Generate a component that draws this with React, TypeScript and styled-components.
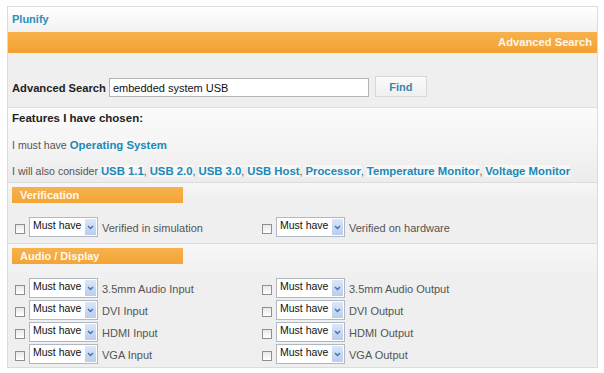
import React from 'react'
import styled, {createGlobalStyle} from 'styled-components'

const GlobalStyle = createGlobalStyle`
  body {
    margin: 0;
    background: #fff;
    font-family: "Liberation Sans", Arial, sans-serif;
  }
`

const chosen = ['Operating System']
const considered = ['USB 1.1', 'USB 2.0', 'USB 3.0', 'USB Host', 'Processor', 'Temperature Monitor', 'Voltage Monitor']

const sections = [
  {title: 'Verification', items: ['Verified in simulation', 'Verified on hardware']},
  {
    title: 'Audio / Display',
    items: [
      '3.5mm Audio Input', '3.5mm Audio Output',
      'DVI Input', 'DVI Output',
      'HDMI Input', 'HDMI Output',
      'VGA Input', 'VGA Output',
    ],
  },
]

const Chevron: React.FC = () => (
  <svg width="7" height="5" viewBox="0 0 7 5">
    <path d="M1 1 L3.5 3.5 L6 1" fill="none" stroke="#4a6fa8" strokeWidth="1.4" />
  </svg>
)

const FeatureRow: React.FC<{label: string}> = ({label}) => (
  <StyledRow>
    <StyledCheck type="checkbox" />
    <StyledSelect>
      <span>Must have</span>
      <StyledArrow><Chevron /></StyledArrow>
    </StyledSelect>
    <StyledRowLabel>{label}</StyledRowLabel>
  </StyledRow>
)

const LinkList: React.FC<{items: string[]}> = ({items}) => (
  <>
    {items.map((item, i) => (
      <React.Fragment key={item}>
        <StyledLink href="#">{item}</StyledLink>
        {i < items.length - 1 && ', '}
      </React.Fragment>
    ))}
  </>
)

const App: React.FC = () => {
  return (
    <StyledPage>
      <GlobalStyle />
      <StyledFrame>
        <StyledTopBar>Plunify</StyledTopBar>
        <StyledTitleBar>Advanced Search</StyledTitleBar>

        <StyledSearch>
          <StyledSearchLabel>Advanced Search</StyledSearchLabel>
          <StyledInput defaultValue="embedded system USB" />
          <StyledFind>Find</StyledFind>
        </StyledSearch>

        <StyledFeatures>
          <StyledFeaturesTitle>Features I have chosen:</StyledFeaturesTitle>
          <StyledLine gap={7}>I must have <LinkList items={chosen} /></StyledLine>
          <StyledLine gap={6}>I will also consider <LinkList items={considered} /></StyledLine>
        </StyledFeatures>

        {sections.map((section) => (
          <StyledSection key={section.title}>
            <StyledSectionHeader>{section.title}</StyledSectionHeader>
            <StyledGrid>
              {section.items.map((item) => <FeatureRow key={item} label={item} />)}
            </StyledGrid>
          </StyledSection>
        ))}
      </StyledFrame>
    </StyledPage>
  )
}

const StyledPage = styled.div`
  padding: 6px 0 0 7px;
`

const StyledFrame = styled.div`
  width: 589px;
  border: 1px solid #dcdcdc;
  display: flex;
  flex-direction: column;
  background: #f0f0f0;
`

const StyledTopBar = styled.div`
  height: 25px;
  line-height: 24px;
  padding-left: 4px;
  font-size: 11px;
  font-weight: bold;
  color: #2b8fbd;
  background: linear-gradient(#ffffff, #f2f2f2);
`

const StyledTitleBar = styled.div`
  height: 21px;
  line-height: 21px;
  padding-right: 5px;
  text-align: right;
  font-size: 11.2px;
  font-weight: bold;
  color: #fff6e6;
  background: linear-gradient(#f7b14c, #f3a232);
`

const StyledSearch = styled.div`
  height: 44px;
  padding: 0 0 10px 4px;
  display: flex;
  align-items: flex-end;
  background: #efefef;
  border-bottom: 1px solid #dedede;
`

const StyledSearchLabel = styled.label`
  font-size: 11.2px;
  font-weight: bold;
  color: #222;
  line-height: 17px;
  margin-right: 3px;
`

const StyledInput = styled.input`
  box-sizing: border-box;
  width: 260px;
  height: 19px;
  border: 1px solid #b5b5b5;
  background: #fff;
  padding: 0 3px;
  font-family: "Liberation Sans", Arial, sans-serif;
  font-size: 11px;
  color: #111;
  outline: none;
`

const StyledFind = styled.button`
  box-sizing: border-box;
  width: 52px;
  height: 21px;
  margin-left: 6px;
  border: 1px solid #d8d8d8;
  background: linear-gradient(#fafafa, #f0f0f0);
  font-family: "Liberation Sans", Arial, sans-serif;
  font-size: 11px;
  font-weight: bold;
  color: #3a86b0;
  padding: 0;
`

const StyledFeatures = styled.div`
  height: 74px;
  padding: 0 4px;
  background: linear-gradient(#fbfbfb, #f6f6f6 40%, #ececec);
  border-bottom: 1px solid #dcdcdc;
`

const StyledFeaturesTitle = styled.div`
  line-height: 20px;
  font-size: 11.5px;
  font-weight: bold;
  color: #222;
`

const StyledLine = styled.div<{gap: number}>`
  margin-top: ${(props) => props.gap}px;
  line-height: 20px;
  font-size: 10.6px;
  color: #555;
`

const StyledLink = styled.a`
  color: #2088b6;
  font-size: 11.35px;
  font-weight: bold;
  text-decoration: none;
  background: #f7f7f7;
`

const StyledSection = styled.div`
  padding: 4px 0 6px 4px;
  background: linear-gradient(#f7f7f7, #efefef 30%, #efefef);
  border-bottom: 1px solid #dcdcdc;

  &:last-child {
    border-bottom: none;
    padding-bottom: 3px;
  }
`

const StyledSectionHeader = styled.div`
  width: 163px;
  height: 16px;
  line-height: 16px;
  padding-left: 8px;
  font-size: 11px;
  font-weight: bold;
  color: #fff8ee;
  background: linear-gradient(#f7b24e, #f3a434);
`

const StyledGrid = styled.div`
  margin-top: 14px;
  display: grid;
  grid-template-columns: 247px 1fr;
  row-gap: 2px;
`

const StyledRow = styled.div`
  display: flex;
  align-items: center;
  height: 20px;
`

const StyledCheck = styled.input`
  appearance: none;
  box-sizing: border-box;
  width: 10px;
  height: 10px;
  margin: 3px 4px 0 3px;
  border: 1px solid #8f8f8f;
  background: linear-gradient(#e8e8e8, #ffffff);
`

const StyledSelect = styled.div`
  box-sizing: border-box;
  width: 69px;
  height: 20px;
  display: flex;
  align-items: stretch;
  border: 1px solid #b0b8c4;
  background: #fff;
  font-size: 10.5px;
  color: #111;

  span {
    flex: 1;
    padding-left: 3px;
    line-height: 15px;
    white-space: nowrap;
  }
`

const StyledArrow = styled.div`
  width: 11px;
  margin: 1px;
  display: flex;
  align-items: center;
  justify-content: center;
  background: linear-gradient(#dbe6f8, #b9cdee);
`

const StyledRowLabel = styled.span`
  margin-left: 4px;
  font-size: 11px;
  color: #555;
  padding-top: 2px;
`

export default App
